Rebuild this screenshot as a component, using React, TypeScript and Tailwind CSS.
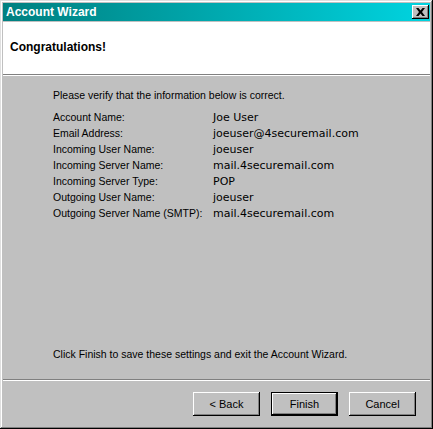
const rows: [string, string][] = [
  ['Account Name:', 'Joe User'],
  ['Email Address:', 'joeuser@4securemail.com'],
  ['Incoming User Name:', 'joeuser'],
  ['Incoming Server Name:', 'mail.4securemail.com'],
  ['Incoming Server Type:', 'POP'],
  ['Outgoing User Name:', 'joeuser'],
  ['Outgoing Server Name (SMTP):', 'mail.4securemail.com'],
];

function Button({ label, primary }: { label: string; primary?: boolean }) {
  return (
    <button
      type="button"
      className={
        'w-[67px] h-[24px] bg-[#c0c0c0] text-[11px] text-black flex items-center justify-center ' +
        (primary
          ? 'shadow-[inset_-1px_-1px_#000,inset_1px_1px_#000,inset_-2px_-2px_#000,inset_2px_2px_#fff,inset_-3px_-3px_#808080]'
          : 'shadow-[inset_-1px_-1px_#000,inset_1px_1px_#fff,inset_-2px_-2px_#808080]')
      }
    >
      {label}
    </button>
  );
}

export default function App() {
  return (
    <div
      className="w-[433px] h-[429px] bg-[#c0c0c0] p-[3px] flex flex-col shadow-[inset_-1px_-1px_#000,inset_1px_1px_#dfdfdf,inset_-2px_-2px_#808080,inset_2px_2px_#fff]"
      style={{ fontFamily: '"Liberation Sans", Arial, sans-serif' }}
    >
      <div className="h-[18px] flex items-center justify-between pl-[3px] pr-[1px] bg-gradient-to-r from-[#008080] to-[#00d4e0]">
        <span className="text-white font-bold text-[12px] leading-none">Account Wizard</span>
        <div className="w-[17px] h-[14px] bg-[#c0c0c0] flex items-center justify-center shadow-[inset_-1px_-1px_#000,inset_1px_1px_#fff,inset_-2px_-2px_#808080]">
          <svg width="9" height="8" viewBox="0 0 9 8" className="-mt-[1px]">
            <path d="M0 0h2.5l2 2.6 2-2.6H9L6 4l3 4H6.5l-2-2.6-2 2.6H0l3-4z" fill="#000" />
          </svg>
        </div>
      </div>
      <div className="h-[1px]" />
      <div className="h-[52px] bg-white flex items-center pl-[7px] pb-[2px]">
        <span className="font-bold text-[12px] text-black">Congratulations!</span>
      </div>
      <div className="h-[1px] bg-[#808080]" />
      <div className="h-[1px] bg-white" />
      <div className="flex-1 flex flex-col pl-[50px] text-[10.5px] text-black">
        <p className="mt-[12px] leading-[14px]">Please verify that the information below is correct.</p>
        <div className="mt-[8px] flex flex-col">
          {rows.map(([k, v]) => (
            <div key={k} className="flex h-[16px] items-center">
              <span className="w-[160px]">{k}</span>
              <span className="text-[11px]" style={{ fontFamily: '"DejaVu Sans", Verdana, sans-serif' }}>
                {v}
              </span>
            </div>
          ))}
        </div>
        <p className="mt-auto mb-[18px] leading-[14px]">Click Finish to save these settings and exit the Account Wizard.</p>
      </div>
      <div className="h-[1px] bg-[#808080]" />
      <div className="h-[1px] bg-white" />
      <div className="h-[45px] flex items-start justify-end gap-[11px] pt-[11px] pr-[14px]">
        <Button label="< Back" />
        <Button label="Finish" primary />
        <Button label="Cancel" />
      </div>
    </div>
  );
}
